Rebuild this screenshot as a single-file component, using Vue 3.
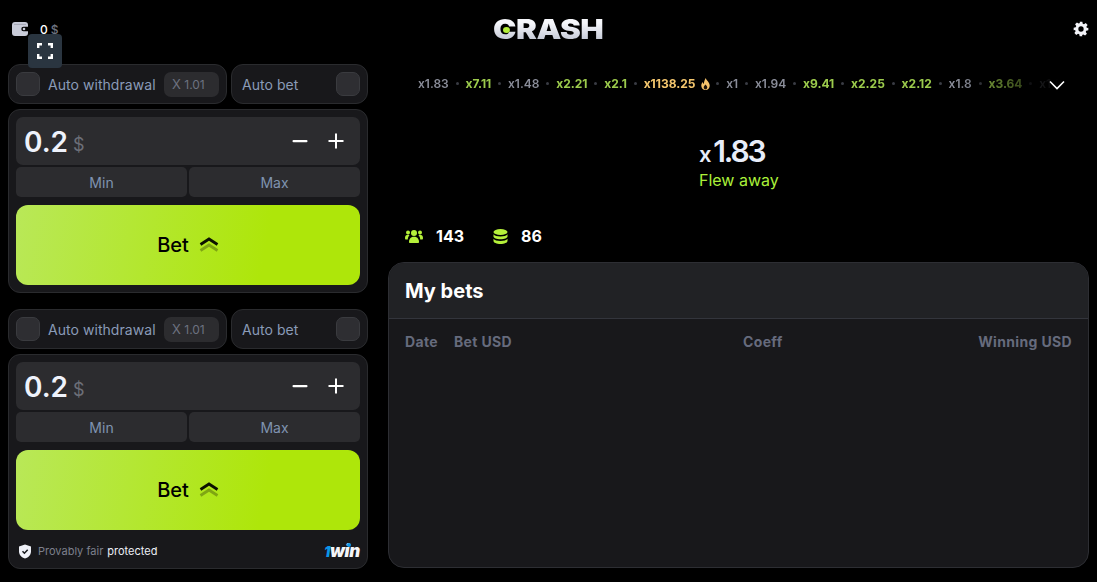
<script setup>
const history = [
  { v: 'x1.83', c: 'low' },
  { v: 'x7.11', c: 'mid' },
  { v: 'x1.48', c: 'low' },
  { v: 'x2.21', c: 'mid' },
  { v: 'x2.1', c: 'mid' },
  { v: 'x1138.25', c: 'top', fire: true },
  { v: 'x1', c: 'low' },
  { v: 'x1.94', c: 'low' },
  { v: 'x9.41', c: 'mid' },
  { v: 'x2.25', c: 'mid' },
  { v: 'x2.12', c: 'mid' },
  { v: 'x1.8', c: 'low' },
  { v: 'x3.64', c: 'mid' },
  { v: 'x1.5', c: 'low' }
]
const panels = [{ id: 1 }, { id: 2, footer: true }]
</script>

<template>
  <div class="page">
    <header class="topbar">
      <div class="balance">
        <svg class="wallet" width="16" height="14" viewBox="0 0 16 14">
          <path d="M3 0h10a3 3 0 0 1 3 3v1.8h-4.5a2.2 2.2 0 0 0 0 4.4H16V11a3 3 0 0 1-3 3H3a3 3 0 0 1-3-3V3a3 3 0 0 1 3-3z" fill="#c9ccd9" />
          <path d="M2 2.4h12" stroke="#9a9dab" stroke-width=".8" />
          <circle cx="12" cy="7" r="1.3" fill="#c9ccd9" />
        </svg>
        <span class="sum">0</span><span class="cur">$</span>
      </div>
      <div class="logo"><span class="logo-text">CRASH</span><i class="logo-dot"></i></div>
      <svg class="gear" width="16" height="16" viewBox="0 0 24 24">
        <path fill="#f2f3f8" fill-rule="evenodd" d="M10 1h4l.6 3.1 1.9.8 2.6-1.8 2.8 2.8-1.8 2.6.8 1.9L23 10v4l-3.1.6-.8 1.9 1.8 2.6-2.8 2.8-2.6-1.8-1.9.8L14 23h-4l-.6-3.1-1.9-.8-2.6 1.8-2.8-2.8 1.8-2.6-.8-1.9L1 14v-4l3.1-.6.8-1.9-1.8-2.6 2.8-2.8 2.6 1.8 1.9-.8zM12 8a4 4 0 1 0 0 8 4 4 0 0 0 0-8z" />
      </svg>
    </header>
    <button class="fullscreen">
      <svg width="16" height="16" viewBox="0 0 16 16" fill="none" stroke="#fff" stroke-width="2.4">
        <path d="M1.2 5V1.2H5M11 1.2h3.8V5M14.8 11v3.8H11M5 14.8H1.2V11" />
      </svg>
    </button>

    <main class="layout">
      <section class="left">
        <div v-for="p in panels" :key="p.id" class="bet-group">
          <div class="auto-row">
            <div class="auto-box withdraw">
              <span class="check"></span>
              <span class="auto-label">Auto withdrawal</span>
              <span class="coef"><small>X</small> 1.01</span>
            </div>
            <div class="auto-box autobet">
              <span class="auto-label">Auto bet</span>
              <span class="check"></span>
            </div>
          </div>
          <div class="bet-card">
            <div class="amount">
              <span class="value">0.2</span>
              <span class="dollar">$</span>
              <div class="steppers">
                <svg width="16" height="16" viewBox="0 0 16 16"><rect x="0.5" y="7" width="15" height="2.2" rx="1" fill="#fff" /></svg>
                <svg width="16" height="16" viewBox="0 0 16 16"><path d="M7 .5h2V7h6.5v2H9v6.5H7V9H.5V7H7z" fill="#fff" /></svg>
              </div>
            </div>
            <div class="limits">
              <button class="limit">Min</button>
              <button class="limit">Max</button>
            </div>
            <button class="bet-btn">
              Bet
              <svg width="20" height="16" viewBox="0 0 20 16" fill="none" stroke-width="2.8">
                <path d="M1.5 13.5 10 8l8.5 5.5" stroke="#0c1200" stroke-opacity=".3" />
                <path d="M1.5 7.5 10 2l8.5 5.5" stroke="#0c1200" />
              </svg>
            </button>
            <div v-if="p.footer" class="fair">
              <svg width="14" height="15" viewBox="0 0 14 15">
                <path d="M7 .5 13 2.5v5c0 3.4-2.4 5.8-6 7-3.6-1.2-6-3.6-6-7v-5z" fill="#eef0f7" />
                <path d="M4.5 7.3 6.4 9.2 9.7 5.8" fill="none" stroke="#17181c" stroke-width="1.5" />
              </svg>
              <span class="fair-text">Provably fair</span>
              <span class="fair-on">protected</span>
              <span class="brand"><b>1</b>win<i class="brand-dot"></i></span>
            </div>
          </div>
        </div>
      </section>

      <section class="right">
        <div class="ticker">
          <div class="ticker-track">
            <template v-for="(h, i) in history" :key="i">
              <span v-if="i" class="sep"></span>
              <span class="tick" :class="h.c">
                {{ h.v }}
                <svg v-if="h.fire" width="9" height="12" viewBox="0 0 9 12">
                  <path d="M4.8 0c.3 2.3 3.900 3.900 3.900 7.500A4.200 4.200 0 0 1 4.500 12 4.200 4.200 0 0 1 .3 7.500C.3 6 1 4.900 1.800 4c.1 1 .5 1.600 1.100 2C3 4 3.500 1.800 4.800 0z" fill="#f5c26b" />
                  <path d="M4.500 6.500c.9 1 1.800 1.800 1.800 3.100a1.800 1.800 0 0 1-3.600 0c0-1.200.9-2 1.800-3.100z" fill="#1a1108" />
                </svg>
              </span>
            </template>
          </div>
          <svg class="chevron" width="16" height="10" viewBox="0 0 16 10" fill="none" stroke="#fff" stroke-width="1.6">
            <path d="M1 1.5 8 8.5l7-7" />
          </svg>
        </div>

        <div class="result">
          <div class="multiplier"><small>x</small>1.83</div>
          <div class="flew">Flew away</div>
        </div>

        <div class="stats">
          <div class="stat">
            <svg width="18" height="14" viewBox="0 0 18 14" fill="#b5f03a">
              <circle cx="9" cy="4" r="3" />
              <path d="M4 13c0-3.400 2.200-5.300 5-5.300s5 1.900 5 5.300c0 .6-.4 1-1 1H5c-.6 0-1-.4-1-1z" />
              <circle cx="3" cy="3.500" r="2" /><circle cx="15" cy="3.500" r="2" />
              <path d="M0 9c0-2 1.200-3.200 3-3.200.6 0 1 .1 1.500.4C3.300 7.400 2.800 9 2.800 10.500H1c-.6 0-1-.5-1-1.500zM18 9c0-2-1.200-3.200-3-3.200-.6 0-1 .1-1.500.4 1.200 1.200 1.700 2.800 1.700 4.300H17c.6 0 1-.5 1-1.500z" />
            </svg>
            <span>143</span>
          </div>
          <div class="stat">
            <svg width="15" height="15" viewBox="0 0 15 15" fill="#b5f03a">
              <ellipse cx="7.500" cy="3" rx="7" ry="3" />
              <path d="M.5 5.200C1.500 6.700 4.300 7.400 7.500 7.400s6-.7 7-2.200v2.300c0 1.600-3.100 2.800-7 2.800s-7-1.200-7-2.800z" />
              <path d="M.5 9.700c1 1.500 3.800 2.200 7 2.200s6-.7 7-2.200V12c0 1.600-3.100 3-7 3s-7-1.400-7-3z" />
            </svg>
            <span>86</span>
          </div>
        </div>

        <div class="bets">
          <h2 class="bets-title">My bets</h2>
          <div class="bets-head">
            <span class="col-date">Date</span>
            <span class="col-bet">Bet USD</span>
            <span class="col-coeff">Coeff</span>
            <span class="col-win">Winning USD</span>
          </div>
        </div>
      </section>
    </main>
  </div>
</template>

<style>
html, body {
  margin: 0;
  background: #000;
}
</style>

<style scoped>
.page {
  position: relative;
  width: 1097px;
  height: 582px;
  overflow: hidden;
  background: #000;
  font-family: Inter, "Liberation Sans", sans-serif;
  color: #fff;
}

.topbar {
  height: 58px;
  padding: 0 8px 0 12px;
  box-sizing: border-box;
  display: flex;
  align-items: center;
  justify-content: space-between;
  position: relative;
}

.balance {
  display: flex;
  align-items: center;
  font-size: 12px;
  font-weight: 500;
}

.wallet {
  margin-right: 12px;
}

.cur {
  margin-left: 3px;
  color: #6f7380;
}

.logo {
  position: absolute;
  left: 493px;
  top: 16px;
  height: 28px;
  line-height: 28px;
}

.logo-text {
  display: inline-block;
  font-size: 27px;
  font-weight: 900;
  letter-spacing: -0.4px;
  transform: scaleX(1.16);
  transform-origin: left center;
  background: linear-gradient(180deg, #f6f7fb 25%, #c5c9d6 85%);
  -webkit-background-clip: text;
  background-clip: text;
  color: transparent;
}

.logo-dot {
  position: absolute;
  left: 10px;
  top: 11px;
  width: 7px;
  height: 6px;
  border-radius: 50%;
  background: #b5f03a;
}

.fullscreen {
  position: absolute;
  left: 28px;
  top: 34px;
  width: 34px;
  height: 34px;
  border: 0;
  border-radius: 4px;
  background: #2a3540;
  display: flex;
  align-items: center;
  justify-content: center;
  padding: 0;
}

.layout {
  display: flex;
  gap: 20px;
  padding: 6px 8px 0;
}

.left {
  width: 360px;
  flex: none;
  display: flex;
  flex-direction: column;
  gap: 16px;
}

.bet-group {
  display: flex;
  flex-direction: column;
  gap: 5px;
}

.auto-row {
  display: flex;
  gap: 4px;
}

.auto-box {
  height: 40px;
  box-sizing: border-box;
  background: #18181b;
  border: 1px solid #2a2b2e;
  border-radius: 12px;
  display: flex;
  align-items: center;
}

.withdraw {
  width: 219px;
  padding: 0 7px;
}

.autobet {
  flex: 1;
  padding: 0 7px 0 10px;
  justify-content: space-between;
}

.check {
  width: 24px;
  height: 24px;
  box-sizing: border-box;
  border-radius: 7px;
  background: #2e2e32;
  border: 1px solid #3a3b3f;
  flex: none;
}

.auto-label {
  font-size: 14px;
  letter-spacing: 0.05px;
  color: #8a9bb8;
}

.withdraw .auto-label {
  margin-left: 8px;
}

.coef {
  margin-left: auto;
  width: 55px;
  height: 25px;
  box-sizing: border-box;
  padding-left: 8px;
  border-radius: 7px;
  background: #2c2c2f;
  color: #6d7280;
  font-size: 12px;
  line-height: 25px;
}

.coef small {
  font-size: 13px;
}

.bet-card {
  background: #18181b;
  border: 1px solid #2a2b2e;
  border-radius: 12px;
  padding: 7px;
  display: flex;
  flex-direction: column;
}

.amount {
  height: 48px;
  border-radius: 7px;
  background: #2c2c2f;
  display: flex;
  align-items: center;
  padding: 0 16px 0 8px;
}

.value {
  font-size: 28px;
  font-weight: 600;
  margin-top: 2px;
  color: #eef2fb;
}

.dollar {
  font-size: 18px;
  color: #6c6f78;
  margin: 6px 0 0 5px;
}

.steppers {
  margin-left: auto;
  display: flex;
  gap: 20px;
}

.limits {
  display: flex;
  gap: 2px;
  margin-top: 2px;
}

.limit {
  flex: 1;
  height: 30px;
  border: 0;
  border-radius: 5px;
  background: #2c2c2f;
  color: #7f93b0;
  font-family: inherit;
  font-size: 14px;
  padding: 0;
}

.bet-btn {
  margin-top: 8px;
  height: 80px;
  border: 0;
  border-radius: 12px;
  background: linear-gradient(100deg, #b9e858 0%, #aee60a 72%);
  color: #000;
  font-family: inherit;
  font-size: 20px;
  font-weight: 500;
  display: flex;
  align-items: center;
  justify-content: center;
  gap: 10px;
  padding: 0;
}

.fair {
  height: 38px;
  margin-bottom: -7px;
  padding: 4px 0 0 2px;
  box-sizing: border-box;
  display: flex;
  align-items: center;
  font-size: 11px;
}

.fair-text {
  margin-left: 6px;
  color: #7d808c;
}

.fair-on {
  margin-left: 4px;
  color: #eceef5;
}

.brand {
  position: relative;
  margin-left: auto;
  font-style: italic;
  font-weight: 900;
  font-size: 17px;
  letter-spacing: -0.3px;
  color: #f4f5f8;
}

.brand b {
  color: #0a95e8;
  font-size: 14px;
  font-weight: 900;
}

.brand-dot {
  position: absolute;
  left: 23px;
  top: 2px;
  width: 4px;
  height: 4px;
  border-radius: 50%;
  background: #0a95e8;
}

.right {
  flex: 1;
  min-width: 0;
  display: flex;
  flex-direction: column;
}

.ticker {
  position: relative;
  height: 39px;
  overflow: hidden;
}

.ticker-track {
  height: 39px;
  display: flex;
  align-items: center;
  padding-left: 30px;
  gap: 6.9px;
  white-space: nowrap;
  width: 640px;
  overflow: hidden;
  -webkit-mask-image: linear-gradient(90deg, #000 85%, transparent 100%);
  mask-image: linear-gradient(90deg, #000 85%, transparent 100%);
}

.tick {
  font-size: 12px;
  font-weight: 600;
  display: flex;
  align-items: center;
  gap: 5px;
  flex: none;
}

.low { color: #8a8d99; }
.mid { color: #9ccb4c; font-weight: 700; }
.top { color: #f5c76e; font-weight: 700; }

.sep {
  width: 3px;
  height: 3px;
  border-radius: 50%;
  background: #3a3c44;
  flex: none;
}

.chevron {
  position: absolute;
  left: 661px;
  top: 16px;
}

.result {
  height: 113px;
  padding: 34px 0 0 311px;
  box-sizing: border-box;
}

.multiplier {
  font-size: 30px;
  line-height: 28px;
  font-weight: 600;
  letter-spacing: -2.2px;
  color: #e8edf9;
}

.multiplier small {
  font-size: 22px;
  margin-right: 4px;
}

.flew {
  font-size: 16px;
  line-height: 24px;
  color: #abf03a;
}

.stats {
  height: 40px;
  display: flex;
  align-items: center;
  gap: 29px;
  padding-left: 17px;
}

.stat {
  display: flex;
  align-items: center;
  gap: 13px;
  font-size: 16px;
  font-weight: 700;
}

.bets {
  margin-top: 6px;
  height: 306px;
  box-sizing: border-box;
  border: 1px solid #2d2e33;
  border-radius: 16px;
  background: #18181b;
  overflow: hidden;
}

.bets-title {
  margin: 0;
  height: 55px;
  line-height: 56px;
  padding-left: 16px;
  font-size: 20px;
  font-weight: 700;
  background: #212225;
  border-bottom: 1px solid #33353c;
}

.bets-head {
  display: flex;
  align-items: center;
  height: 44px;
  padding: 0 16px;
  color: #666b7d;
  font-size: 14px;
  font-weight: 700;
  letter-spacing: 0.35px;
}

.col-date { width: 49px; }
.col-bet { width: 289px; }
.col-coeff { width: 120px; }
.col-win { margin-left: auto; }
</style>
